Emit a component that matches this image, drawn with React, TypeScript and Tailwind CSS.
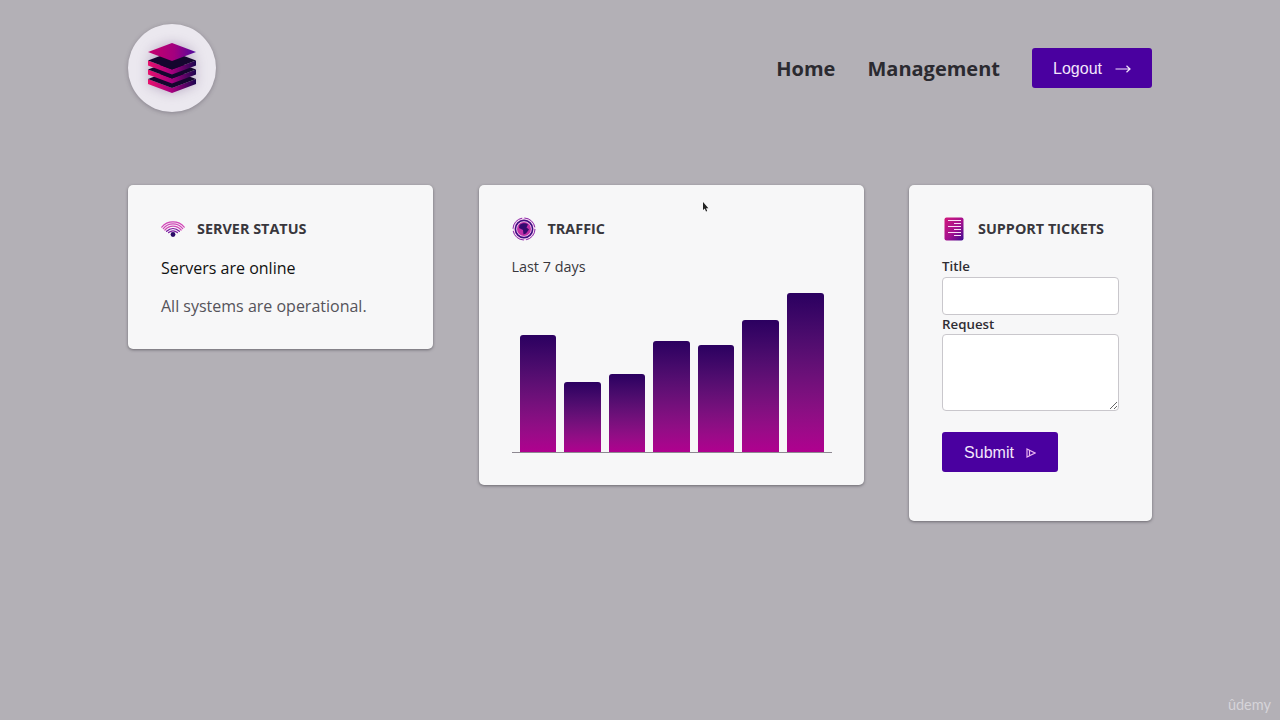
import React from "react";

const heights = [117, 70, 78, 111, 107, 132, 159];

function Layer({ y, top, side }: { y: number; top: string; side: string }) {
  return (
    <g transform={`translate(0 ${y})`}>
      <path d="M0 9 L24 18 L48 9 L48 14 L24 23 L0 14 Z" fill={side} />
      <path d="M0 9 L24 0 L48 9 L24 18 Z" fill={top} />
    </g>
  );
}

function Logo() {
  return (
    <svg width="48" height="50" viewBox="0 0 48 50" className="blur-[0.5px] drop-shadow-[0_0_6px_rgba(120,90,140,0.45)]">
      <defs>
        <linearGradient id="lt" x1="0" y1="0" x2="1" y2="0">
          <stop offset="0" stopColor="#c8006c" />
          <stop offset="0.55" stopColor="#a3007f" />
          <stop offset="1" stopColor="#4f0aa0" />
        </linearGradient>
        <linearGradient id="ls" x1="0" y1="0" x2="1" y2="0">
          <stop offset="0" stopColor="#e8106c" />
          <stop offset="0.5" stopColor="#a5007f" />
          <stop offset="1" stopColor="#1c0650" />
        </linearGradient>
      </defs>
      <Layer y={27} top="#14062e" side="url(#ls)" />
      <Layer y={17.5} top="#14062e" side="url(#ls)" />
      <Layer y={8.5} top="#14062e" side="url(#ls)" />
      <path d="M0 9 L24 0 L48 9 L24 18 Z" fill="url(#lt)" />
    </svg>
  );
}

function WifiIcon() {
  return (
    <svg width="24" height="16" viewBox="0 0 24 16" fill="none">
      <g stroke="#d045b6" strokeWidth="1.25" strokeLinecap="round">
        <path d="M0.8 6.2 C6.5 -0.8 17.5 -0.8 23.2 6.2" />
        <path d="M2.3 7.6 C7.5 1.4 16.5 1.4 21.7 7.6" />
        <path d="M3.9 9 C8.5 3.8 15.5 3.8 20.1 9" />
      </g>
      <g stroke="#7a1aa0" strokeWidth="1.25" strokeLinecap="round">
        <path d="M5.6 10.3 C9.5 6.6 14.5 6.6 18.4 10.3" />
        <path d="M7.6 11.6 C10.5 9.2 13.5 9.2 16.4 11.6" />
      </g>
      <circle cx="12" cy="13.5" r="2.4" fill="#2a0a66" />
    </svg>
  );
}

function GlobeIcon() {
  return (
    <svg width="24" height="24" viewBox="0 0 24 24" fill="none">
      <circle cx="12" cy="12" r="11.2" fill="#f6d5f0" />
      <circle cx="12" cy="12" r="11" stroke="#8a2aa8" strokeWidth="1" strokeDasharray="15 2.3" />
      <circle cx="12" cy="12" r="8.6" stroke="#3d0a80" strokeWidth="1.6" />
      <circle cx="12" cy="12" r="7" fill="#c02fa8" />
      <path d="M7.5 8 C10 5.8 14 5.8 16 7.5 L14.5 10.5 L17 12.5 L14 16.5 L11.5 17.5 L11 13 L7 11 Z" fill="#34096f" />
    </svg>
  );
}

function TicketsIcon() {
  return (
    <svg width="20" height="24" viewBox="0 0 20 24">
      <defs>
        <linearGradient id="tg" x1="0" y1="0" x2="1" y2="1">
          <stop offset="0" stopColor="#d2197c" />
          <stop offset="0.55" stopColor="#a3108f" />
          <stop offset="1" stopColor="#3d0a90" />
        </linearGradient>
      </defs>
      <rect x="0.5" y="0.5" width="19" height="23" rx="2" fill="url(#tg)" />
      <g stroke="#f9def5" strokeWidth="1">
        <path d="M4 3.5H17M10 6.5H17M4 9.5H17M10 12.5H17M4 15.5H17M10 18.5H17" />
      </g>
    </svg>
  );
}

function CardTitle({ icon, title }: { icon: React.ReactNode; title: string }) {
  return (
    <div className="flex items-center gap-3">
      {icon}
      <h2 className="text-[14.4px] leading-[24px] font-bold text-[#39373d]">{title}</h2>
    </div>
  );
}

export default function App() {
  return (
    <div className="relative h-[720px] w-[1280px] overflow-hidden bg-[#b3b0b6] font-['Open_Sans',sans-serif]">
      <div className="mx-auto w-[1024px]">
        <header className="flex items-center justify-between pt-6">
          <div className="flex h-[88px] w-[88px] items-center justify-center rounded-full bg-[#ebe8ef] shadow-[0_1px_4px_rgba(60,50,70,0.35)]">
            <Logo />
          </div>
          <nav className="flex items-center gap-8">
            <a className="pt-[2px] text-[20px] font-bold text-[#2b2a30]">Home</a>
            <a className="pt-[2px] text-[20px] font-bold text-[#2b2a30]">Management</a>
            <button className="flex h-10 w-[120px] items-center justify-center gap-[13px] rounded-[3px] bg-[#4a00a0] pt-[1px] font-['Liberation_Sans',sans-serif] text-[16px] text-[#f3e6fb]">
              Logout
              <svg width="16" height="10" viewBox="0 0 16 10" fill="none" stroke="#f3e6fb" strokeWidth="1.2">
                <path d="M0.5 5H15M11.5 1.8L15 5L11.5 8.2" />
              </svg>
            </button>
          </nav>
        </header>

        <main className="mt-[73px] flex items-start justify-between">
          <section className="h-[164px] w-[305px] rounded-[5px] bg-[#f7f7f8] px-[33px] pt-[32px] shadow-[0_1px_3px_rgba(50,45,55,0.55)]">
            <CardTitle icon={<WifiIcon />} title="SERVER STATUS" />
            <p className="mt-[15px] text-[16px] leading-[24px] text-[#111]">Servers are online</p>
            <p className="mt-[14px] text-[16px] leading-[24px] text-[#55535a]">All systems are operational.</p>
          </section>

          <section className="h-[300px] w-[385px] rounded-[5px] bg-[#f7f7f8] pl-[33px] pr-[32px] pt-[32px] shadow-[0_1px_3px_rgba(50,45,55,0.55)]">
            <CardTitle icon={<GlobeIcon />} title="TRAFFIC" />
            <p className="mt-[14px] text-[14.4px] leading-[24px] text-[#39373d]">Last 7 days</p>
            <div className="mt-[14px] flex h-[160px] items-end gap-2 border-b border-[#8d8891] px-2">
              {heights.map((h, i) => (
                <div
                  key={i}
                  className="flex-1 rounded-t-[3px] bg-gradient-to-b from-[#2b0060] to-[#b0008f]"
                  style={{ height: h }}
                />
              ))}
            </div>
          </section>

          <section className="h-[336px] w-[243px] rounded-[5px] bg-[#f7f7f8] px-[33px] pt-[32px] shadow-[0_1px_3px_rgba(50,45,55,0.55)]">
            <div className="flex items-center gap-[14px] pl-[2px]">
              <TicketsIcon />
              <h2 className="text-[14.4px] leading-[24px] font-bold text-[#39373d]">SUPPORT TICKETS</h2>
            </div>
            <form className="mt-[16px] flex flex-col">
              <label className="text-[13.3px] leading-[18px] font-semibold text-[#2f2d33]">Title</label>
              <input className="mt-[2px] h-[38px] w-[177px] rounded-[4px] border border-[#c9c7cc] bg-white" />
              <label className="text-[13.3px] leading-[18px] font-semibold text-[#2f2d33]">Request</label>
              <textarea className="mt-[1px] block h-[77px] w-[177px] rounded-[4px] border border-[#c9c7cc] bg-white" />
              <button
                type="button"
                className="mt-[21px] flex h-10 w-[116px] items-center justify-center gap-3 rounded-[3px] bg-[#4a00a0] pt-[1px] font-['Liberation_Sans',sans-serif] text-[16px] text-[#f3e6fb]"
              >
                Submit
                <svg width="10" height="10" viewBox="0 0 10 10" fill="none" stroke="#eab4f0" strokeWidth="1.2">
                  <path d="M1 1L9 5L1 9Z M3.5 2.5V7.5" />
                </svg>
              </button>
            </form>
          </section>
        </main>
      </div>

      <svg className="absolute left-[701px] top-[201px]" width="8" height="12" viewBox="0 0 8 12">
        <path d="M2 1V9L3.8 7.6L5 10.5L6.2 10L5 7.2H7.4Z" fill="#222" />
      </svg>
      <span className="absolute bottom-[7px] right-[9px] font-['Lato',sans-serif] text-[14.5px] leading-[16px] text-[#d6d4d9]">
        ûdemy
      </span>
    </div>
  );
}
